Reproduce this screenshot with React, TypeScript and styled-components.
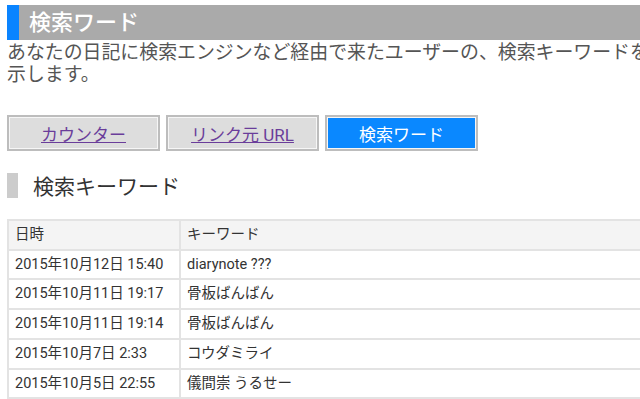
import React from "react";
import styled, { createGlobalStyle } from "styled-components";

const GlobalStyle = createGlobalStyle`
  html, body {
    margin: 0;
    padding: 0;
    background: #fff;
    overflow: hidden;
  }
  body {
    font-family: Roboto, "Noto Sans CJK JP", sans-serif;
    color: #333;
  }
`;

const Page = styled.div`
  width: 700px;
  padding: 5px 0 0 7px;
`;

const TitleBar = styled.h1`
  margin: 0;
  height: 35px;
  display: flex;
  align-items: center;
  background: #aaaaaa;
  border-left: 12px solid #0a84ff;
  padding-left: 10px;
  color: #fff;
  font-size: 22px;
  font-weight: 500;
  line-height: 1;
`;

const Lead = styled.p`
  margin: 2px 0 0;
  width: 650px;
  font-size: 18.9px;
  line-height: 22px;
  color: #555;
`;

const Tabs = styled.nav`
  display: flex;
  gap: 6px;
  margin-top: 29px;
`;

const Tab = styled.a<{ $active?: boolean }>`
  box-sizing: border-box;
  width: 153px;
  height: 36px;
  display: flex;
  align-items: center;
  justify-content: center;
  border: 2px solid #bdbdbd;
  box-shadow: inset 0 0 0 1px #f6f6f6;
  background: ${(p) => (p.$active ? "#0a88ff" : "#dddddd")};
  color: ${(p) => (p.$active ? "#fff" : "#6a3d9a")};
  text-decoration: ${(p) => (p.$active ? "none" : "underline")};
  font-size: 17px;
  cursor: pointer;
`;

const SectionTitle = styled.h2`
  margin: 21px 0 0;
  display: flex;
  align-items: center;
  gap: 15px;
  font-size: 21px;
  font-weight: normal;
  color: #333;
  height: 26px;

  &::before {
    content: "";
    display: block;
    width: 11px;
    height: 25px;
    background: #cccccc;
  }
`;

const Table = styled.table`
  margin-top: 21px;
  width: 700px;
  border-collapse: collapse;
  font-size: 14.5px;
  color: #333;

  th,
  td {
    border: 2px solid #e3e3e3;
    padding: 0 6px;
    height: 27.7px;
    line-height: 27.7px;
    text-align: left;
    font-weight: normal;
    white-space: nowrap;
  }
  th {
    background: #f4f4f4;
  }
  th:first-child,
  td:first-child {
    width: 158px;
  }
`;

const rows = [
  ["2015年10月12日 15:40", "diarynote ???"],
  ["2015年10月11日 19:17", "骨板ばんばん"],
  ["2015年10月11日 19:14", "骨板ばんばん"],
  ["2015年10月7日 2:33", "コウダミライ"],
  ["2015年10月5日 22:55", "儀間崇 うるせー"],
];

export default function App() {
  return (
    <>
      <GlobalStyle />
      <Page>
        <TitleBar>検索ワード</TitleBar>
        <Lead>
          あなたの日記に検索エンジンなど経由で来たユーザーの、検索キーワードを示します。
        </Lead>
        <Tabs>
          <Tab>カウンター</Tab>
          <Tab>リンク元 URL</Tab>
          <Tab $active>検索ワード</Tab>
        </Tabs>
        <SectionTitle>検索キーワード</SectionTitle>
        <Table>
          <thead>
            <tr>
              <th>日時</th>
              <th>キーワード</th>
            </tr>
          </thead>
          <tbody>
            {rows.map(([date, word], i) => (
              <tr key={i}>
                <td>{date}</td>
                <td>{word}</td>
              </tr>
            ))}
          </tbody>
        </Table>
      </Page>
    </>
  );
}
